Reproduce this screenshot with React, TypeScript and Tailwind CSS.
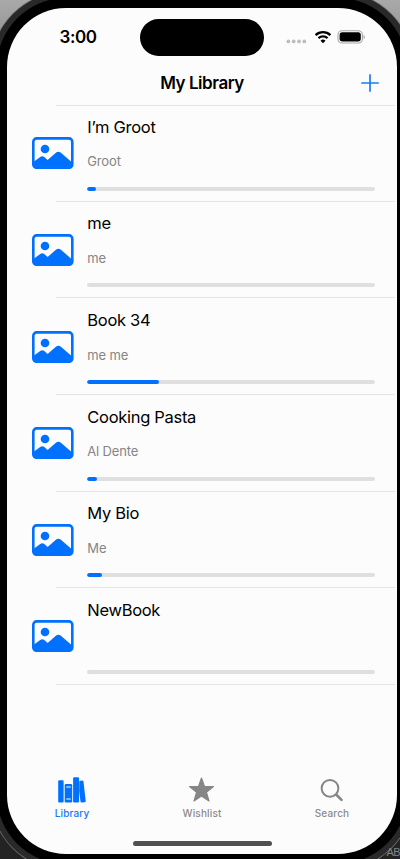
import React from "react";

type Book = { title: string; author: string; progress: number };

const books: Book[] = [
  { title: "I’m Groot", author: "Groot", progress: 8.5 },
  { title: "me", author: "me", progress: 0 },
  { title: "Book 34", author: "me me", progress: 71.5 },
  { title: "Cooking Pasta", author: "Al Dente", progress: 10.2 },
  { title: "My Bio", author: "Me", progress: 15 },
  { title: "NewBook", author: "", progress: 0 },
];

function PhotoIcon() {
  return (
    <svg className="block h-8 w-[42px]" viewBox="0 0 42 32" fill="none">
      <rect x="1.3" y="1.4" width="39" height="29.4" rx="3.4" stroke="#0070ff" strokeWidth="2.6" />
      <circle cx="13" cy="12" r="4.3" fill="#0070ff" />
      <path
        d="M1 25.3 L8.6 19.8 Q10.3 18.5 12 19.8 L15.6 23 L24.2 15.6 Q26.4 14 28.6 15.6 L39.6 25 V28 Q39.6 31 37 31 H4.5 Q1 31 1 28 Z"
        fill="#0070ff"
      />
    </svg>
  );
}

function StatusBar() {
  return (
    <div className="flex h-[58px] items-start">
      <div className="w-[133px] pl-[52.5px] pt-[18px] text-[17px] font-semibold leading-[22px] tracking-[-0.4px]">
        3:00
      </div>
      <div className="mt-[11px] h-[36.5px] w-[124px] rounded-full bg-black" />
      <div className="ml-[22px] mt-[20px] flex">
        <svg className="mt-[11px] h-[5px] w-[21px]" viewBox="0 0 21 5" fill="#bebebe">
          <circle cx="2.4" cy="2.4" r="1.9" />
          <circle cx="7.7" cy="2.4" r="1.9" />
          <circle cx="13" cy="2.4" r="1.9" />
          <circle cx="18.3" cy="2.4" r="1.9" />
        </svg>
        <svg className="ml-[6.7px] mt-[1.5px] h-[14px] w-[18px]" viewBox="0 0 18 14" fill="none">
          <path d="M1.6 5.1 A10.7 10.7 0 0 1 16.4 5.1" stroke="#000" strokeWidth="2.4" />
          <path d="M4.5 8.1 A6.6 6.6 0 0 1 13.5 8.1" stroke="#000" strokeWidth="2.2" />
          <path d="M9 13.2 L6.5 10.7 A3.6 3.6 0 0 1 11.5 10.7 Z" fill="#000" />
        </svg>
        <svg className="ml-[5.8px] mt-[2px] h-[14px] w-[29px]" viewBox="0 0 29 14" fill="none">
          <rect x="1" y="0.8" width="24.4" height="12.2" rx="4" stroke="#a6a6a6" strokeWidth="1.1" />
          <rect x="2.6" y="2.3" width="21.2" height="9.2" rx="2.7" fill="#000" />
          <path d="M26.5 5 Q27.9 5.6 27.9 7 Q27.9 8.4 26.5 9 Z" fill="#a6a6a6" />
        </svg>
      </div>
    </div>
  );
}

function NavBar() {
  return (
    <div className="grid h-[39px] grid-cols-[1fr_auto_1fr] items-start">
      <span />
      <h1 className="pt-[6px] text-[17px] font-semibold leading-[22px] tracking-[-0.45px]">My Library</h1>
      <svg className="mr-[18.5px] mt-[8px] size-[18px] justify-self-end" viewBox="0 0 18 18" stroke="#187cf2" strokeWidth="1.7" strokeLinecap="round">
        <path d="M9 0.9 V17.1 M0.9 9 H17.1" />
      </svg>
    </div>
  );
}

function BookRow({ book }: { book: Book }) {
  return (
    <li className="flex h-[96.64px] pl-[25px]">
      <div className="-mr-[18px] w-[42px] pt-[32.3px]">
        <PhotoIcon />
      </div>
      <div className="mr-[2px] flex-1 border-b border-[#e4e4e4] pl-[31.3px] pr-[20px]">
        <div className="mt-[9.7px] h-[24px] text-[16.5px] leading-[24px] tracking-[-0.3px]">{book.title}</div>
        <div className="mt-[13.6px] h-[18px] text-[13px] leading-[18px] tracking-[-0.15px] text-[#858585]">{book.author}</div>
        <div className="mt-[16.4px] h-1 w-full overflow-hidden rounded-full bg-[#dfdfe0]">
          <div className="h-full rounded-full bg-[#0070ff]" style={{ width: book.progress }} />
        </div>
      </div>
    </li>
  );
}

function BooksIcon() {
  return (
    <svg className="h-[26px] w-[28px]" viewBox="0 0 28 26">
      <g fill="#0070ff">
        <rect x="0.2" y="3.2" width="5.4" height="22.3" rx="1.2" />
        <rect x="6.7" y="7" width="7.5" height="18.5" rx="1.2" />
        <rect x="15.1" y="0.3" width="6" height="25.2" rx="1.2" />
        <path d="M21.4 4 L24.3 3.6 Q25.3 3.5 25.5 4.5 L27.7 24 Q27.8 25.2 26.7 25.3 L23.7 25.6 Q22.7 25.7 22.5 24.6 L21.2 14 Z" />
      </g>
      <path d="M8.7 10 H12.3 M8.7 22 H12.3" stroke="#fcfcfc" strokeWidth="1.2" strokeLinecap="round" />
    </svg>
  );
}

function TabBar() {
  return (
    <nav className="flex justify-between px-[30px] text-[10px] font-medium leading-[14px] tracking-[0.15px] text-[#8b8b8b]">
      <div className="flex w-[70px] flex-col items-center text-[#1479f6]">
        <div className="flex h-[29px] items-start"><BooksIcon /></div>
        <span>Library</span>
      </div>
      <div className="flex w-[70px] flex-col items-center">
        <div className="flex h-[29px] items-start">
          <svg className="mr-[1.5px] h-[26px] w-[27px]" viewBox="0 0 27 26" fill="#868686" stroke="#868686" strokeWidth="1.2" strokeLinejoin="round">
            <path d="M13.5 1 L16.5 9.4 L25.5 9.6 L18.4 15.2 L21 24 L13.5 18.9 L6 24 L8.6 15.2 L1.5 9.6 L10.5 9.4 Z" />
          </svg>
        </div>
        <span>Wishlist</span>
      </div>
      <div className="flex w-[70px] flex-col items-center">
        <div className="flex h-[29px] items-start pt-[1px]">
          <svg className="h-[25px] w-[24px]" viewBox="0 0 24 25" fill="none" stroke="#868686" strokeLinecap="round">
            <circle cx="10" cy="10.3" r="8.4" strokeWidth="2" />
            <path d="M16.4 16.8 L21.5 21.9" strokeWidth="2.7" />
          </svg>
        </div>
        <span>Search</span>
      </div>
    </nav>
  );
}

export default function App() {
  return (
    <div className="relative h-[859px] w-[400px] overflow-hidden bg-[linear-gradient(#a9a9a9_0,#8e8e8e_50px,#232323_90px)] font-['Inter','Liberation_Sans',sans-serif] text-black">
      <span className="absolute right-0 top-[844px] z-10 font-['Liberation_Sans',sans-serif] text-[11px] leading-[16px] tracking-[-0.6px] text-[#858585]">AB</span>
      <div className="relative -ml-[9px] -mt-[8px] h-[878px] w-[422px] rounded-[75px] bg-[#292929] p-[6px] shadow-[0_0_0_0.7px_#777]">
        <div className="h-full rounded-[69px] bg-black p-[10px]">
          <div className="flex h-[846px] w-[390px] flex-col overflow-hidden rounded-[59px] bg-[#fcfcfc]">
            <StatusBar />
            <NavBar />
            <div className="-mt-[0.5px] pl-[49px] pr-[2px]">
              <div className="h-px bg-[#e4e4e4]" />
            </div>
            <ul className="-mt-[0.5px] w-full">
              {books.map((b) => (
                <BookRow key={b.title} book={b} />
              ))}
            </ul>
            <div className="mt-auto">
              <TabBar />
              <div className="mx-auto mb-[8px] mt-[21px] h-[5px] w-[139px] rounded-full bg-[#505050]" />
            </div>
          </div>
        </div>
      </div>
    </div>
  );
}
